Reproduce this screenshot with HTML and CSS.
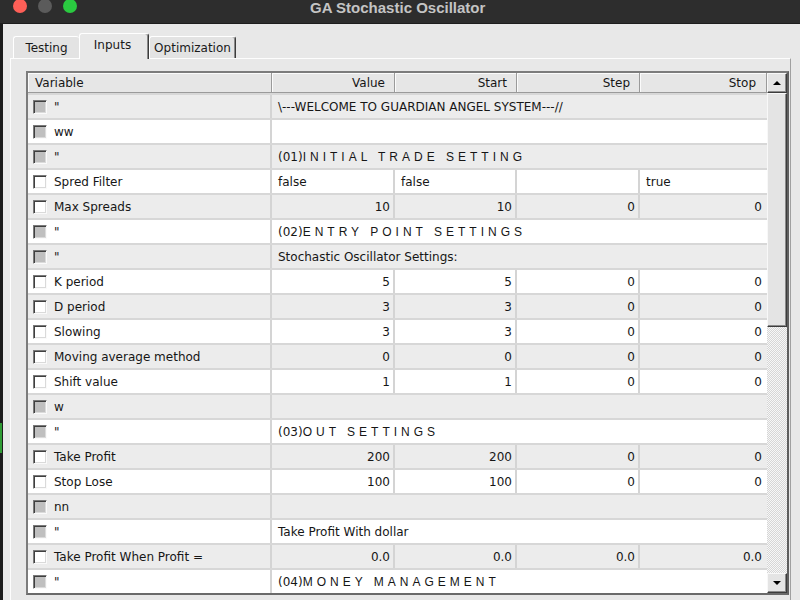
FILE: index.html
```html
<!DOCTYPE html>
<html>
<head>
<meta charset="utf-8">
<title>GA Stochastic Oscillator</title>
<link rel="stylesheet" href="styles.css">
</head>
<body>
<div class="titlebar">
  <div class="lights"><span class="light red"></span><span class="light gray"></span><span class="light green"></span></div>
  <div class="title">GA Stochastic Oscillator</div>
</div>
<div class="window">
  <div class="edge"><span class="edge-green"></span></div>
  <div class="main">
    <div class="tabs">
      <div class="tab testing">Testing</div>
      <div class="tab active">Inputs</div>
      <div class="tab opt">Optimization</div>
    </div>
    <div class="panel">
      <div class="grid-box">
        <div class="grid">
          <div class="row head">
            <div class="h h1">Variable</div>
            <div class="h">Value</div>
            <div class="h">Start</div>
            <div class="h">Step</div>
            <div class="h hlast">Stop</div>
          </div>

          <div class="row g"><div class="c1"><span class="cb dis"></span>"</div><div class="span">\---WELCOME TO GUARDIAN ANGEL SYSTEM---//</div></div>
          <div class="row w"><div class="c1"><span class="cb dis"></span>ww</div><div class="span"></div></div>
          <div class="row g"><div class="c1"><span class="cb dis"></span>"</div><div class="span">(01)<span class="sp">INITIAL TRADE SETTING</span></div></div>
          <div class="row w"><div class="c1"><span class="cb"></span>Spred Filter</div><div class="txt">false</div><div class="txt">false</div><div class="txt"></div><div class="txt last">true</div></div>
          <div class="row g"><div class="c1"><span class="cb"></span>Max Spreads</div><div class="num">10</div><div class="num">10</div><div class="num">0</div><div class="num last">0</div></div>
          <div class="row w"><div class="c1"><span class="cb dis"></span>"</div><div class="span">(02)<span class="sp">ENTRY POINT SETTINGS</span></div></div>
          <div class="row g"><div class="c1"><span class="cb dis"></span>"</div><div class="span">Stochastic Oscillator Settings:</div></div>
          <div class="row w"><div class="c1"><span class="cb"></span>K period</div><div class="num">5</div><div class="num">5</div><div class="num">0</div><div class="num last">0</div></div>
          <div class="row g"><div class="c1"><span class="cb"></span>D period</div><div class="num">3</div><div class="num">3</div><div class="num">0</div><div class="num last">0</div></div>
          <div class="row w"><div class="c1"><span class="cb"></span>Slowing</div><div class="num">3</div><div class="num">3</div><div class="num">0</div><div class="num last">0</div></div>
          <div class="row g"><div class="c1"><span class="cb"></span>Moving average method</div><div class="num">0</div><div class="num">0</div><div class="num">0</div><div class="num last">0</div></div>
          <div class="row w"><div class="c1"><span class="cb"></span>Shift value</div><div class="num">1</div><div class="num">1</div><div class="num">0</div><div class="num last">0</div></div>
          <div class="row g"><div class="c1"><span class="cb dis"></span>w</div><div class="span"></div></div>
          <div class="row w"><div class="c1"><span class="cb dis"></span>"</div><div class="span">(03)<span class="sp">OUT SETTINGS</span></div></div>
          <div class="row g"><div class="c1"><span class="cb"></span>Take Profit</div><div class="num">200</div><div class="num">200</div><div class="num">0</div><div class="num last">0</div></div>
          <div class="row w"><div class="c1"><span class="cb"></span>Stop Lose</div><div class="num">100</div><div class="num">100</div><div class="num">0</div><div class="num last">0</div></div>
          <div class="row g"><div class="c1"><span class="cb dis"></span>nn</div><div class="span"></div></div>
          <div class="row w"><div class="c1"><span class="cb dis"></span>"</div><div class="span">Take Profit With dollar</div></div>
          <div class="row g"><div class="c1"><span class="cb"></span>Take Profit When Profit =</div><div class="num">0.0</div><div class="num">0.0</div><div class="num">0.0</div><div class="num last">0.0</div></div>
          <div class="row w"><div class="c1"><span class="cb dis"></span>"</div><div class="span">(04)<span class="sp">MONEY MANAGEMENT</span></div></div>
        </div>
        <div class="scrollbar">
          <div class="sbtn"><span class="arrow up"></span></div>
          <div class="thumb"></div>
          <div class="track"></div>
          <div class="sbtn"><span class="arrow down"></span></div>
        </div>
      </div>
    </div>
  </div>
</div>
</body>
</html>
```

FILE: styles.css
```css
* { box-sizing: border-box; }
html, body { margin: 0; padding: 0; }
body {
  width: 800px;
  height: 600px;
  overflow: hidden;
  background: #e8e8e8;
  font-family: "DejaVu Sans", Verdana, sans-serif;
  font-size: 12px;
  color: #161616;
}

/* title bar */
.titlebar {
  height: 24px;
  background: #2d2d2d;
  border-bottom: 1px solid #1d1d1d;
  display: flex;
  align-items: flex-start;
  overflow: hidden;
}
.lights { display: flex; gap: 11px; padding-left: 13px; margin-top: -1px; }
.light { width: 14px; height: 14px; border-radius: 50%; display: block; }
.red { background: #fe5f57; }
.gray { background: #5b5b5b; }
.green { background: #2ac940; }
.title {
  margin-left: 233px;
  margin-top: 0;
  font: bold 15px/15px "Liberation Sans", Arial, sans-serif;
  color: #c4c4c4;
}

/* window body */
.window { display: flex; height: 576px; }
.edge { width: 3px; background: #1b1b1b; display: flex; flex-direction: column; }
.edge-green { margin-top: 399px; height: 30px; width: 2px; background: #2f9b34; }
.main {
  flex: 1;
  padding: 9px 9px 0 7px;
  display: flex;
  flex-direction: column;
}

/* tabs */
.tabs {
  display: flex;
  align-items: flex-end;
  height: 25px;
  padding-left: 3px;
  position: relative;
  z-index: 1;
}
.tab {
  height: 22px;
  display: flex;
  align-items: center;
  justify-content: center;
  background: #e3e3e3;
  border-top: 1px solid #fff;
  border-left: 1px solid #fff;
  border-radius: 3px 3px 0 0;
  color: #1a1a1a;
}
.tab.testing { width: 66px; }
.tab.active {
  width: 70px;
  height: 26px;
  margin-bottom: -1px;
  padding-bottom: 3px;
  padding-right: 3px;
  background: #e8e8e8;
  border-right: 1px solid #3c3c3c;
  box-shadow: inset -1px 0 #8a8a8a;
}
.tab.opt {
  width: 87px;
  border-right: 1px solid #3c3c3c;
  box-shadow: inset -1px 0 #8a8a8a;
}

/* panel */
.panel {
  flex: 1;
  border-top: 1px solid #fdfdfd;
  border-left: 1px solid #fdfdfd;
  border-right: 1px solid #a0a0a0;
  padding: 12px 0 0 15px;
}

.grid-box {
  width: 763px;
  height: 524px;
  display: flex;
  border: 2px solid #7c7c7c;
  border-right-color: #5e5e5e;
  border-bottom-color: #6a6a6a;
}
.grid { width: 739px; display: flex; flex-direction: column; }

.row {
  display: grid;
  grid-template-columns: 244px 123px 122px 123px 127px;
  height: 25px;
  flex: none;
  border-top: 2px solid #d7d7d7;
}
.row.g { background: #ececec; }
.row.w { background: #ffffff; }
.row > div {
  display: flex;
  align-items: center;
  white-space: nowrap;
  overflow: hidden;
}
.c1 {
  padding-left: 5px;
  gap: 7px;
  border-right: 2px solid #d4d4d4;
}
.span { grid-column: 2 / 6; padding-left: 6px; }
.sp {
  font-family: "Liberation Sans", Arial, sans-serif;
  letter-spacing: 4px;
}
.txt { padding-left: 6px; border-right: 2px solid #d4d4d4; }
.num { justify-content: flex-end; padding-right: 3px; border-right: 2px solid #d4d4d4; }
.row > .last { border-right: none; padding-right: 5px; }

/* header */
.row.head {
  height: 20px;
  background: #e6e6e6;
  border-top: none;
  border-bottom: 1px solid #9a9a9a;
}
.h {
  justify-content: flex-end;
  padding-right: 9px;
  border-right: 1px solid #9a9a9a;
  box-shadow: inset 1px 1px 0 #fbfbfb;
}
.h.h1 { justify-content: flex-start; padding-left: 7px; }
.h.hlast { padding-right: 10px; border-right: 1px solid #9a9a9a; }

/* checkbox */
.cb {
  width: 14px;
  height: 14px;
  flex: none;
  background: #fff;
  border: 1px solid;
  border-color: #7a7a7a #fafafa #fafafa #7a7a7a;
  box-shadow: inset 1px 1px 0 #3f3f3f, inset -1px -1px 0 #dadada;
}
.cb.dis { background: #bfbfbf; }

/* scrollbar */
.scrollbar { width: 20px; display: flex; flex-direction: column; }
.sbtn {
  height: 20px;
  flex: none;
  background: #e4e4e4;
  border: 1px solid;
  border-color: #f8f8f8 #3c3c3c #3c3c3c #f8f8f8;
  box-shadow: inset -1px -1px 0 #8a8a8a;
  display: flex;
  align-items: center;
  justify-content: center;
}
.arrow { width: 0; height: 0; border-left: 4px solid transparent; border-right: 4px solid transparent; }
.arrow.up { border-bottom: 4px solid #000; }
.arrow.down { border-top: 4px solid #000; }
.thumb {
  height: 234px;
  flex: none;
  background: #e4e4e4;
  border: 1px solid;
  border-color: #f8f8f8 #3c3c3c #3c3c3c #f8f8f8;
  box-shadow: inset -1px -1px 0 #8a8a8a;
}
.track {
  flex: 1;
  background: repeating-conic-gradient(#d6d6d6 0 25%, #f7f7f7 0 50%) 0 0 / 2px 2px;
}
```
